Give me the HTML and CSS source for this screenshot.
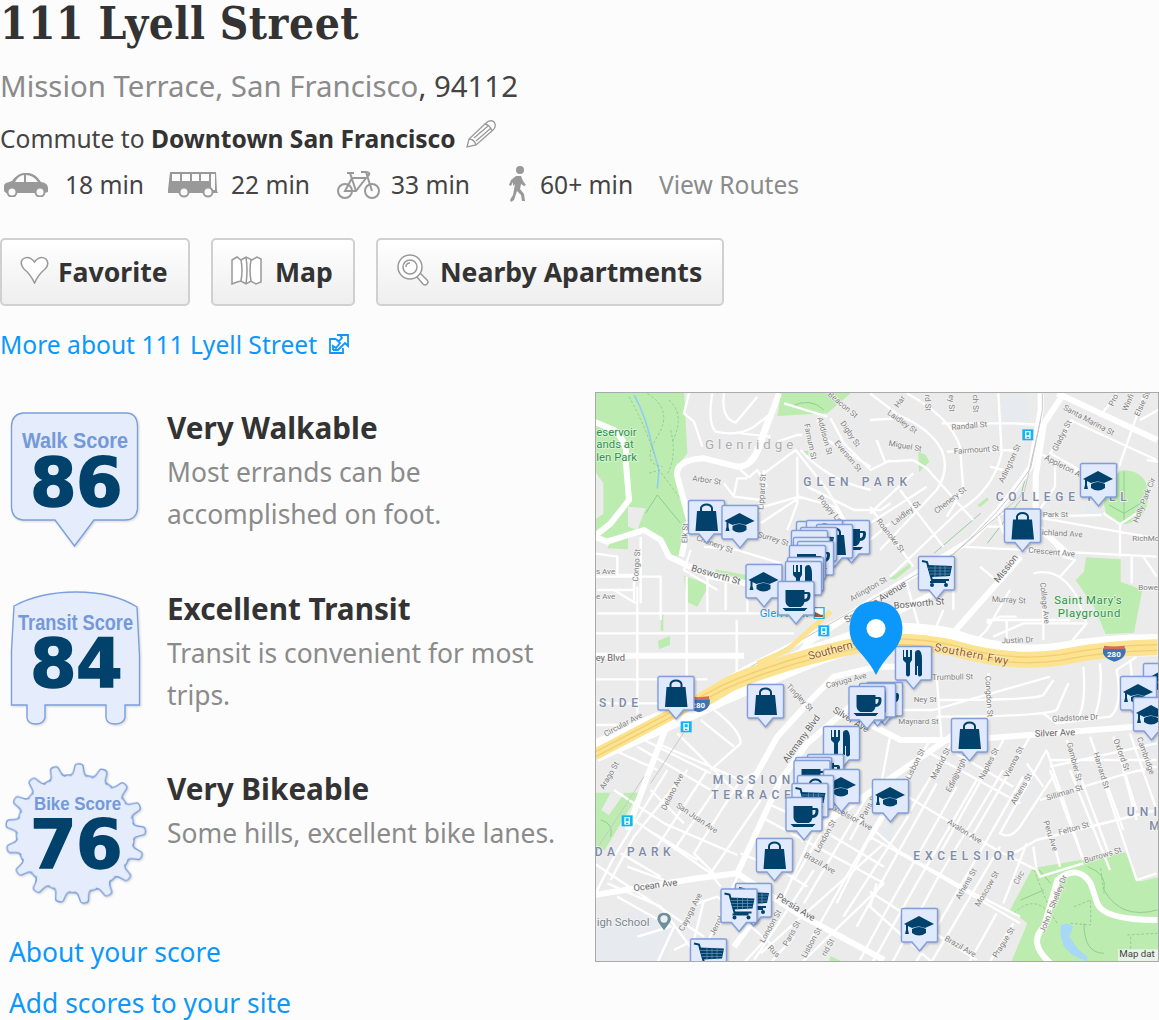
FILE: index.html
```
<!DOCTYPE html>
<html lang="en">
<head>
    <meta charset="utf-8">
    <title>111 Lyell Street</title>
    <link rel="stylesheet" href="styles.css">
</head>
<body>
    <header class="header">
        <h1>111 Lyell Street</h1>
        <p class="location"><a href="#">Mission Terrace,</a> <a href="#">San Francisco</a>, 94112</p>
        <div class="commute">
            <span>Commute to <b>Downtown San Francisco</b></span>
            <svg class="pencil" width="32" height="30" viewBox="0 0 32 30"><path d="M2 28L4 20L21 4Q25 0 29 3Q32 7 28 11L11 26ZM4 20Q9 20 11 26M20 5Q25 6 27 12M9 19L23 7M11 22L26 9"/></svg>
        </div>
        <div class="routes">
            <svg width="46" height="24" viewBox="0 0 46 24"><path fill="#999" fill-rule="evenodd" d="M1 18V13Q1 10 6 9L9 8Q15 0 21 0H26Q33 1 38 9Q45 10 45 15V19L41 20H3ZM12 9H21V2Q16 2 12 9ZM23 2V9H35Q30 2 23 2Z"/><circle class="wheel" cx="9" cy="19" r="4.5"/><circle class="wheel" cx="37" cy="19" r="4.5"/></svg>
            <span class="time time-car">18 min</span>
            <svg width="50" height="26" viewBox="0 0 50 26"><path fill="#999" fill-rule="evenodd" d="M2 0H48L49 19L50 21H0V18ZM4 2V9H12V2ZM14 2V9H22V2ZM24 2V9H31V2ZM33 2V9H41V2ZM43 2V18H47V2Z"/><circle class="wheel" cx="16" cy="20" r="4.5"/><circle class="wheel" cx="40" cy="20" r="4.5"/></svg>
            <span class="time time-bus">22 min</span>
            <svg width="44" height="29" viewBox="0 0 44 29"><g fill="none" stroke="#999" stroke-width="2"><circle cx="8" cy="20" r="7"/><circle cx="35" cy="20" r="7"/><path d="M8 20L15 7H29L19 20H8ZM19 20L13 2M10 2H17M35 20L29 1H24M30 1Q34 2 31 5"/></g></svg>
            <span class="time time-bike">33 min</span>
            <svg class="walker" width="17" height="36" viewBox="0 0 17 36"><circle cx="11" cy="4" r="4" fill="#999"/><path fill="#999" d="M7 10L12 10L14 15L17 19L15 20L12 18L11 23L15 28L16 35H13L12 29L8 25L5 34L2 36L1 34L4 29L6 18L4 20V16L2 20L0 19L2 14Z"/></svg>
            <span class="time time-walk">60+ min</span>
            <a href="#" class="view-routes">View Routes</a>
        </div>
        <div class="buttons">
            <button class="btn btn-favorite"><svg width="29" height="28" viewBox="0 0 29 28"><path d="M14.5 27Q11 19 4 13Q-1 7 3 3Q9-1 14.5 6Q20-1 26 3Q30 8 25 13Q18 19 14.5 27Z"/></svg>Favorite</button>
            <button class="btn btn-map"><svg width="31" height="29" viewBox="0 0 31 29"><path d="M1 4L6 1L10 4L15 1L21 4L26 1L30 3V26L25 28L20 25L15 28L10 25L6 26L1 28ZM10 4Q12 14 10 25M15 1Q17 14 15 28M20 4Q18 14 20 25"/></svg>Map</button>
            <button class="btn btn-nearby"><svg width="32" height="32" viewBox="0 0 32 32"><path d="M20 23L26 30Q28 32 30 30Q32 28 30 26L23 19"/><circle cx="13" cy="13" r="12"/><circle cx="13" cy="13" r="7"/><path d="M9 13Q9 9 13 9"/></svg>Nearby Apartments</button>
        </div>
        <a href="#" class="more">More about 111 Lyell Street
            <svg width="20" height="20" viewBox="0 0 20 20"><path d="M7 5H1V19H14V14M4 16V12L7 14L11 9L7 5M8 1H19V12L16 9L9 16H4M11 1L13 4L9 8"/></svg>
        </a>
    </header>

    <main class="content">
        <section class="scores">
            <div class="score">
                <svg class="badge" width="150" height="152" viewBox="0 400 150 152">
                    <path class="badge-shape" d="M23 413H126Q137 413 137.5 426V509Q136 520 125 520H94L74.5 546L55 520H23Q12 519 11.5 507V426Q12 414 23 413Z"/>
                    <text class="badge-label" x="22" y="448" textLength="106" lengthAdjust="spacingAndGlyphs">Walk Score</text>
                    <text class="badge-num" x="76" y="506">86</text>
                </svg>
                <div class="score-text">
                    <h2>Very Walkable</h2>
                    <p>Most errands can be accomplished on foot.</p>
                </div>
            </div>
            <div class="score">
                <svg class="badge" width="150" height="152" viewBox="0 580 150 152">
                    <path class="badge-shape" d="M14 605Q40 591 76 591Q113 591 137 606L139.5 655V704H125V717Q123 723 115 723Q107 723 106 717V704H45V717Q43 723 36 723Q28 723 27 717V704H11.5V650Z"/>
                    <text class="badge-label" x="18" y="628.5" textLength="115" lengthAdjust="spacingAndGlyphs">Transit Score</text>
                    <text class="badge-num" x="76" y="686">84</text>
                </svg>
                <div class="score-text">
                    <h2>Excellent Transit</h2>
                    <p>Transit is convenient for most trips.</p>
                </div>
            </div>
            <div class="score">
                <svg class="badge" width="150" height="152" viewBox="0 760 150 152">
                    <g class="badge-shape" id="gear" transform="translate(75.5 832.7) rotate(3)"><circle r="59"/></g>
                    <text class="badge-label bike" x="34" y="809" textLength="87" lengthAdjust="spacingAndGlyphs">Bike Score</text>
                    <text class="badge-num" x="76" y="867">76</text>
                </svg>
                <div class="score-text">
                    <h2>Very Bikeable</h2>
                    <p>Some hills, excellent bike lanes.</p>
                </div>
            </div>
            <nav class="links">
                <a href="#">About your score</a>
                <a href="#">Add scores to your site</a>
            </nav>
        </section>

        <div class="map">
            <svg width="562" height="568" viewBox="596 393 562 568">
                <defs>
                    <path id="box" d="M2 .5H35Q36.500 .5 36.5 2V32Q36.5 34 35 34H26L18.5 43L11 34H2Q.5 34 .5 32V2Q.5 .5 2 .5Z"/>
                    <path id="bag" d="M9 11H28L30 31H7.5ZM12 11V8Q13 3.5 18.5 3.5Q24 3.5 25 8V11H23V8Q22 5.5 18.5 5.5Q15 5.5 14 8V11Z"/>
                    <path id="cap" d="M3 16L18 8L33 16L24 20Q18 17 11 20L7 18V22L8 26H4L5 22V17ZM11 21Q18 17 25 21V25Q18 30 11 25Z"/>
                    <path id="cup" d="M8 9H27V11H31Q33 11 33 14Q33 21 27 21Q26 25 23 26H12Q8 24 8 20ZM27 13V18Q30 18 30 14V13ZM5 27H30L27 30H8Z" fill-rule="evenodd"/>
                    <path id="fork" d="M8 4H9V11H11V4H13V11H15V4H17V14L15 17V29Q13 32 11 29V17L8 14ZM20 29V7Q20 4 24 4Q27 6 27 13V29Q24 32 23 29V20H22V29Z"/>
                    <g id="cart"><path d="M4 5L9 6L14 24H31M12 26H28" fill="none" stroke="#00426b" stroke-width="2"/><path d="M9 9L34 10L32 20L13 21Z"/><path d="M10 12H33M11 15H32M12 18H32M17 9V21M22 9V21M27 9V21" stroke="#6f93b5" stroke-width=".7"/><circle cx="14" cy="29" r="2"/><circle cx="28" cy="29" r="2"/></g>
                    <g id="station"><path d="M0 0H33V33H0Z" fill="#11b5f5"/><path d="M8 5H25V28H8Z" fill="#fff"/><path d="M12 9H21V18H12ZM13 22H20V26H13Z" fill="#11b5f5"/></g>
                </defs>

                <!-- drawn at 3x, tiles of 828 x 570 -->
                <g transform="translate(594 390) scale(.33333)">
                    <g class="park">
                        <path d="M0 0H270L280 190L245 235L262 310L285 390L262 500L230 495L190 450L140 415L102 425V478L40 475L60 440L0 450V390L28 372V280L0 240Z"/>
                        <path d="M562 5H775L700 70L550 78ZM270 557L337 580V600L310 650L278 635ZM365 538L455 555V570L365 545ZM200 674H208V722H200ZM192 752L228 738V765L195 778ZM628 183H643V195H628Z"/>
                        <path d="M973 185L995 195L1006 215L975 247ZM1150 345L1180 322L1184 330L1158 352ZM885 567L948 520L950 532L905 568Z"/>
                        <path d="M1530 330Q1515 260 1590 240Q1660 245 1662 310Q1665 390 1590 403Q1530 400 1530 330ZM1476 502L1580 508V575L1645 600L1620 728L1535 732L1500 650L1445 570L1470 545Z"/>
                        <path d="M0 1208H136L32 1380H0ZM1248 1560L1315 1435L1595 1387L1635 1475L1700 1460V1720H1250L1300 1600ZM710 1698L745 1715H705Z"/>
                    </g>
                    <path fill="#e7ebef" d="M1218 15H1305V98H1230ZM0 1610L130 1560L250 1620L210 1720H0ZM1475 340L1520 345V375L1475 370ZM860 1320L905 1290L890 1355L850 1350ZM1630 1050L1700 1040V1110Z"/>
                    <path fill="#ebebeb" d="M102 350L155 355L130 420L102 410ZM50 1208H92L45 1275L22 1260Z"/>
                    <path fill="#a8d8f8" d="M1400 1605Q1425 1595 1437 1612L1425 1640L1450 1675L1480 1700V1715L1435 1695L1410 1670L1400 1640Z"/>
                    <path class="stream" d="M120 15Q155 75 175 170L195 240L190 295"/>
                    <g class="trail">
                        <path d="M105 20Q150 100 180 190M160 10Q240 60 190 140T205 230M230 120Q250 200 220 250M165 250L195 240L255 320M225 30Q275 75 235 155M1260 1570Q1330 1500 1390 1600M1320 1440L1360 1540M1520 1435L1530 1510M1440 1550L1490 1530V1605L1430 1600M1600 1635L1690 1630M1610 1640V1700"/>
                    </g>
                    <path class="trail solid" d="M155 370L190 315L260 400M20 1290Q60 1300 50 1340M590 50Q650 20 690 60M1480 1430Q1540 1450 1530 1500Q1580 1590 1690 1560M1470 1600Q1470 1690 1530 1690M1020 490L1160 370M1180 460L1280 330M1280 320L1310 200M1335 1440L1370 1480M1280 1530L1350 1500M1590 245V400M1590 370L1545 345M1590 370L1640 340"/>

                    <g class="minor">
                        <path d="M285 10L270 70L300 95L325 170M355 10Q340 100 365 125Q430 140 480 110L525 75M390 10Q380 85 425 98L490 20M520 80L480 190L440 240L465 262M440 130L530 140M570 40L700 80M550 155L610 135H625M510 250L605 180L700 300L770 420M390 280L420 320L500 330M465 262L490 240L520 290M420 315L430 265L460 265M510 240L500 360L480 370M510 350L615 320L720 350L770 420M610 200V340L580 420M640 290L780 360L860 360L890 340M500 400L620 320M670 90L700 150L830 230M710 85L750 160L830 240L890 210M620 180Q700 270 830 300M330 470L430 480L560 520"/>
                        <path d="M0 490L70 500V555H120V640M0 560H200V690M140 440V640M10 600H120M60 600L125 640M10 670H560M0 730H600M130 590V1010M278 560V900M200 600V670M428 690V860M0 868H340M10 940H280M0 1005H220M340 540V670M395 560V660M460 540V670M290 480L270 540L370 600M530 560L560 650"/>
                    </g>
                    <g class="minor" transform="translate(828 0)">
                        <path d="M0 10L85 75Q180 115 215 180Q240 240 200 300L30 480M0 90L80 85M110 10Q240 80 270 170L280 300L230 380M215 100L430 100L515 105M230 185L440 180M385 10L395 190Q370 300 270 360L60 560M20 150L45 215L130 210M130 210L170 235L310 390M0 370L130 250M90 300L220 470M0 450L60 400M0 400L170 290M0 350L130 530M360 230L400 240M510 190L600 240L680 250M555 230V290L495 380M610 90L540 190L630 240M600 90L860 210M820 20L740 250M740 10L690 80M865 60L810 90M490 380L860 445M390 370L480 375M340 410H420M515 380L695 375M270 470L860 500M750 400V500M700 370L750 403L800 370M830 210L865 215M785 500V580M520 420Q560 470 580 500L615 510L570 560M820 500L860 560M380 360L400 430M490 550Q570 530 620 620L650 700L600 760M330 530L390 580M450 500L370 600"/>
                        <path d="M110 580L150 720Q170 740 195 720L220 660M250 600V660M420 600L350 720L310 760M350 690H600M410 690V750M350 700L390 680H440M370 740L460 700H650M520 600V750M200 860L215 1050M355 850V1040M0 960H190L540 860M210 930Q500 930 520 915L550 870M200 980Q520 980 560 960L595 880M520 970L560 1000L720 980Q760 950 740 840L800 800M640 830Q650 950 620 990M690 820Q700 920 670 990M780 810L800 980M60 1040L30 1200M180 1050L140 1120L0 1350M250 1050L110 1280M400 1050L210 1390M480 1040L300 1350M530 1080L390 1330Q420 1350 450 1310L555 1150M530 1080L570 1200L640 1410M590 1050L720 1400M660 1040L760 1320M730 1040L800 1260M780 1030L860 1260M540 1130L860 1060M510 1230L770 1150L860 1130M470 1120L520 1190M540 1110L860 1110"/>
                    </g>
                    <g class="minor" transform="translate(0 1140)">
                        <path d="M60 60L210 160L430 255M170 60L270 160M190 -80L440 30L500 0M130 -70L350 60M110 -110L350 10M60 -60L190 0M360 -180Q440 -120 440 -80L350 0M250 -110L440 80M320 -150L420 -70M220 0L60 260L0 380M280 0L120 200L50 330M340 0L190 230M390 20L240 240M440 30L300 250L360 310M500 90L350 310M120 150L350 310L380 350M80 250L200 320M100 290L210 330M180 190L310 270M40 340L200 410L310 560M0 280L330 500M70 380L230 470L130 500M310 400L370 380L540 530M330 390L300 510L240 540M240 470L180 600M430 320L340 520M440 250L560 300L640 350M500 140L870 340M520 100L650 160L870 290M540 480L430 600M600 500L510 600M660 300L480 570M720 50L560 400M780 20L600 330M830 60L630 400M870 120L650 510M500 550L870 220M600 600L870 340"/>
                    </g>
                    <g class="minor" transform="translate(828 1140)">
                        <path d="M0 170L80 240L330 380L450 440M80 60L380 240L500 300M0 365L320 570M0 200L160 290L450 460M180 -50L450 100M240 -60L430 50M0 100L-60 210M50 120L0 200L-100 400M120 130L-80 440M200 40L-40 470M260 50L50 420L-30 570M320 30L140 340L0 590M400 0L200 330L60 590M460 20L230 420L130 590M390 230L170 600M470 220L400 400M380 430L290 590M430 460L350 590M20 340L0 410L200 590M490 230L500 300L510 320L640 280M430 250L500 210L860 120M550 210L570 290M540 0L640 270M600 0L720 300M690 0L800 330L860 310M760 0L800 150"/>
                    </g>
                    <g class="major">
                        <path d="M0 95L60 120Q105 160 95 210L105 330L50 400L0 440L40 455L150 420L200 450L225 500L350 560L560 600M555 10L500 160Q480 230 430 230L330 205Q240 210 250 260L285 390L262 500"/>
                        <path d="M1340 10V60L1310 230Q1230 350 1130 450L740 690L450 840L330 910L0 1080M1410 10L1350 100L1325 260V375M1390 10L1690 150M1320 400L1420 490M1280 500L1050 760M800 720L1040 600M0 797H450M450 1220L550 1040L650 930L720 860L850 830H1000M820 1000L920 1050L1110 1050L1690 1005M580 840L640 760L850 620M430 1450L560 1170L640 1060L780 940M0 1515L310 1465L430 1450L610 1570L870 1710M620 1350L1100 1020M420 1670L500 1560M240 950L160 1160L100 1320"/>
                        <path d="M1370 1720Q1300 1660 1350 1610L1390 1470Q1450 1420 1490 1480L1510 1540Q1530 1590 1690 1590"/>
                    </g>
                    <path class="rail" d="M1345 10V60L1310 235Q1220 370 1080 490L640 740L470 830M170 1180L320 950L400 910L540 880L600 790M0 1390L150 1160M1340 90L1290 310L1000 560"/>
                    <path d="M0 1085L240 980L390 910Q530 850 650 800L850 730Q980 730 1060 745Q1250 815 1400 790Q1530 765 1690 765" fill="none" stroke="#fff" stroke-width="66"/>
                    <path class="freeway-edge" d="M300 945L410 880Q600 800 850 755Q980 750 1080 775Q1250 825 1400 802Q1530 775 1690 772"/>
                    <path class="freeway" d="M0 1095L200 990L390 890Q600 800 850 755Q980 750 1080 775Q1250 825 1400 802Q1530 775 1690 772"/>
                    <path class="freeway ramp" d="M490 820L580 780L710 665"/>
                    <g class="freeway-line">
                        <path d="M0 1088L200 983L390 883Q600 793 850 747Q980 742 1080 767Q1250 817 1400 794Q1530 767 1690 764"/>
                        <path d="M0 1103L200 998L390 898Q600 808 850 764Q980 759 1080 784Q1250 834 1400 811Q1530 784 1690 781"/>
                    </g>

                    <g class="road-name">
                        <text x="294" y="272" transform="rotate(8 294 272)">Arbor St</text><text x="508" y="360" transform="rotate(-86 508 360)">Lippard St</text><text x="630" y="103" transform="rotate(78 630 103)">Farnum St</text><text x="670" y="84" transform="rotate(75 670 84)">Addison St</text><text x="738" y="100" transform="rotate(56 738 100)">Digby St</text><text x="720" y="160" transform="rotate(50 720 160)">Everson St</text><text x="700" y="16" transform="rotate(40 700 16)">Beacon St</text><text x="305" y="450" transform="rotate(20 305 450)">Chenery St</text><text x="490" y="440" transform="rotate(17 490 440)">Surrey St</text><text x="670" y="325" transform="rotate(50 670 325)">Poppy Ln</text><text x="280" y="460" transform="rotate(-88 280 460)">Elk St</text><text x="132" y="575" transform="rotate(-86 132 575)">Congo St</text><text x="6" y="552">s Ave</text><text x="6" y="626">e Ave</text>
                        <text class="big" x="290" y="542" transform="rotate(16 290 542)">Bosworth St</text><text class="big" x="5" y="812">ey Blvd</text>
                    </g>
                    <g class="road-name" transform="translate(828 0)">
                        <text x="50" y="72" transform="rotate(35 50 72)">Laidley St</text><text x="55" y="167" transform="rotate(10 55 167)">Miguel St</text><text x="245" y="120" transform="rotate(-5 245 120)">Randall St</text><text x="252" y="192" transform="rotate(-4 252 192)">Fairmount St</text><text x="400" y="280" transform="rotate(-65 400 280)">Arlington St</text><text x="560" y="185" transform="rotate(-63 560 185)">Gladys St</text><text x="578" y="58" transform="rotate(28 578 58)">Santa Marina St</text><text x="522" y="208" transform="rotate(27 522 208)">Appleton Ave</text><text x="72" y="407" transform="rotate(-38 72 407)">Laidley St</text><text x="200" y="372" transform="rotate(-38 200 372)">Chenery St</text><text x="18" y="394" transform="rotate(52 18 394)">Roanoke St</text><text x="518" y="380">Park St</text><text x="515" y="435" transform="rotate(3 515 435)">ichland Ave</text><text x="475" y="488" transform="rotate(5 475 488)">Crescent Ave</text><text x="787" y="453">RichMo</text><text x="803" y="400" transform="rotate(-68 803 400)">Holly Park Cir</text><text x="730" y="50" transform="rotate(-65 730 50)">Pro</text><text x="770" y="65" transform="rotate(-65 770 65)">Winfi</text><text x="807" y="80" transform="rotate(-65 807 80)">Elsie St</text><text x="85" y="55" transform="rotate(-55 85 55)">Har</text><text x="165" y="14" transform="rotate(88 165 14)">rd St</text><text x="236" y="14" transform="rotate(88 236 14)">ey St</text><text x="308" y="14" transform="rotate(88 308 14)">ch St</text><text class="big" x="385" y="580" transform="rotate(-52 385 580)">Mission</text>
                        <text class="big" x="-70" y="700" transform="rotate(-32 -70 700)">San Jose Avenue</text><text x="-55" y="635" transform="rotate(-30 -55 635)">Arlington St</text><text class="big" x="72" y="656" transform="rotate(-5 72 656)">Bosworth St</text><text x="365" y="635" transform="rotate(3 365 635)">Murray St</text><text x="510" y="578" transform="rotate(84 510 578)">College Ave</text><text x="395" y="760" transform="rotate(-2 395 760)">Justin Dr</text><text x="187" y="870" transform="rotate(-1 187 870)">Trumbull St</text><text x="131" y="937">Ney St</text><text x="85" y="1003">Maynard St</text><text x="346" y="858" transform="rotate(87 346 858)">Congdon St</text><text x="547" y="995" transform="rotate(-3 547 995)">Gladstone Dr</text><text class="big" x="495" y="1040" transform="rotate(-2 495 1040)">Silver Ave</text><text x="-130" y="895" transform="rotate(-15 -130 895)">Cayuga Ave</text><text x="120" y="1170" transform="rotate(-63 120 1170)">Lisbon St</text><text x="195" y="1170" transform="rotate(-63 195 1170)">Madrid St</text><text x="240" y="1205" transform="rotate(-63 240 1205)">Edinburgh St</text><text x="340" y="1170" transform="rotate(-63 340 1170)">Naples St</text><text x="415" y="1165" transform="rotate(-63 415 1165)">Vienna St</text><text x="435" y="1245" transform="rotate(-60 435 1245)">Athens St</text><text x="590" y="1060" transform="rotate(75 590 1060)">Gambier St</text><text x="670" y="1090" transform="rotate(73 670 1090)">Harvard St</text><text x="730" y="1050" transform="rotate(70 730 1050)">Oxford St</text><text x="800" y="1045" transform="rotate(70 800 1045)">Cambridge</text><text x="805" y="600">Bowe</text>
                    </g>
                    <g class="road-name" transform="translate(0 1140)">
                        <text x="30" y="60" transform="rotate(-60 30 60)">Arago St</text><text x="215" y="122" transform="rotate(-63 215 122)">Delano Ave</text><text x="245" y="110" transform="rotate(34 245 110)">San Juan Ave</text><text class="big" x="120" y="364" transform="rotate(-8 120 364)">Ocean Ave</text><text x="268" y="485" transform="rotate(-63 268 485)">Cayuga Ave</text><text x="360" y="498" transform="rotate(-63 360 498)">Jerrol</text><text class="big" x="545" y="385" transform="rotate(32 545 385)">Persia Ave</text><text x="628" y="260" transform="rotate(30 628 260)">Brazil Ave</text><text x="705" y="115" transform="rotate(28 705 115)">Excelsior Ave</text><text x="674" y="250" transform="rotate(-61 674 250)">London St</text><text x="510" y="520" transform="rotate(-61 510 520)">London St</text><text x="580" y="530" transform="rotate(-61 580 530)">Paris St</text><text x="635" y="565" transform="rotate(-61 635 565)">Lisbon St</text><text x="695" y="560" transform="rotate(-61 695 560)">rid St</text><text x="810" y="150" transform="rotate(-61 810 150)">Paris S</text><text x="520" y="535" transform="rotate(45 520 535)">Rus</text><text x="35" y="-100" transform="rotate(-28 35 -100)">Circular Ave</text><text x="575" y="-250" transform="rotate(46 575 -250)">Tingley St</text><text class="big" x="580" y="-20" transform="rotate(-54 580 -20)">Alemany Blvd</text><text class="big" x="715" y="-175" transform="rotate(32 715 -175)">Silver Ave</text><text class="big school" x="8" y="468">igh School</text>
                    </g>
                    <g class="road-name" transform="translate(828 1140)">
                        <text x="230" y="160" transform="rotate(32 230 160)">Avalon Ave</text><text x="270" y="390" transform="rotate(-60 270 390)">Athens St</text><text x="328" y="412" transform="rotate(-60 328 412)">Moscow St</text><text x="222" y="510" transform="rotate(30 222 510)">Brazil Ave</text><text x="380" y="565" transform="rotate(-58 380 565)">Prague St</text><text x="520" y="155" transform="rotate(72 520 155)">Peru Ave</text><text x="532" y="92" transform="rotate(-17 532 92)">Silliman St</text><text x="568" y="195" transform="rotate(-15 568 195)">Felton St</text><text x="645" y="280" transform="rotate(-17 645 280)">Burrows St</text><text x="523" y="490" transform="rotate(-68 523 490)">John F Shelley Dr</text><text x="443" y="345" transform="rotate(-60 443 345)">Circ</text><text x="240" y="68" transform="rotate(-60 240 68)">Edinb</text>
                    </g>

                    <g class="area">
                        <text class="light" x="333" y="178" textLength="272">Glenridge</text>
                        <text x="628" y="289" textLength="318">GLEN PARK</text>
                        <text x="1205" y="333" textLength="400">COLLEGE HILL</text>
                        <text x="15" y="950" textLength="124">SIDE</text>
                        <text x="356" y="1182" textLength="240">MISSION</text>
                        <text x="352" y="1226" textLength="245">TERRACE</text>
                        <text x="2" y="1399" textLength="235">DA PARK</text>
                        <text x="958" y="1410" textLength="310">EXCELSIOR</text>
                        <text x="1598" y="1278" textLength="98">UNI</text>
                        <text x="1666" y="1320">M</text>
                    </g>
                    <g class="park-name">
                        <text x="7" y="137">eservoir</text><text x="7" y="174">ands at</text><text x="7" y="212">len Park</text>
                        <text x="1381" y="643" textLength="202">Saint Mary's</text><text x="1391" y="681" textLength="188">Playground</text>
                    </g>
                    <g class="freeway-name"><text x="646" y="810" transform="rotate(-15 646 810)">Southern</text><text x="1020" y="782" transform="rotate(11 1020 782)" textLength="225">Southern Fwy</text></g>
                    <text class="transit-name" x="497" y="682">Glen Park</text>
                    <path d="M661 653H690V685H661Z" fill="#fff" stroke="#11b5f5" stroke-width="4"/><path d="M663 666L680 674H687V681H663Z" fill="#9a5938"/>
                    <use href="#station" x="1285" y="118"/><use href="#station" x="673" y="706"/><use href="#station" x="260" y="994"/><use href="#station" x="83" y="1276"/>
                    <g id="shield"><path fill="#3f73b8" d="M1528 775H1594Q1600 805 1561 815Q1520 803 1528 775Z"/><path fill="#d56a5b" d="M1530 767Q1560 772 1592 767V778H1530Z"/><text class="shield-text" x="1539" y="801">280</text></g>
                    <use href="#shield" x="-1247" y="152"/>
                    <path fill="#6f8f9c" d="M210 1621Q190 1595 190 1588Q190 1568 210 1568Q231 1568 231 1588Q231 1595 210 1621Z"/><circle cx="210" cy="1587" r="11" fill="#e9eef0"/>
                    <path fill="#f4f4f4" fill-opacity=".8" d="M1572 1678H1700V1720H1572Z"/><text class="credit" x="1576" y="1702">Map dat</text>
                </g>

                <g id="markers"></g>
                <path fill="#0c98fb" d="M876 675Q871 664 857 649Q849 640 849.5 627Q852 601 876 601Q900 602 902.5 627Q903 640 894 650Q881 664 876 675Z"/>
                <circle cx="876" cy="628.5" r="9.5" fill="#fff"/>
            </svg>
        </div>
    </main>

    <script src="map.js"></script>
</body>
</html>
```
FILE: styles.css
```
* {
    box-sizing: border-box;
    margin: 0;
    padding: 0;
}

body {
    width: 1159px;
    height: 1020px;
    overflow: hidden;
    background: #fcfcfc;
    color: #444;
    font-family: "Noto Sans", "Open Sans", sans-serif;
    font-size: 24.6px;
}

a {
    color: #0c98fb;
    text-decoration: none;
}

.header {
    display: flex;
    flex-direction: column;
    height: 392px;
}

h1 {
    height: 61px;
    color: #333;
    font-family: "DejaVu Serif Condensed", "DejaVu Serif", serif;
    font-size: 44px;
    font-stretch: condensed;
    font-weight: bold;
    letter-spacing: 0.5px;
    line-height: 48px;
    white-space: nowrap;
}

.location {
    height: 50px;
    font-size: 29.4px;
    line-height: 50px;
}

.location a,
.view-routes {
    color: #8b8b8b;
}

.commute {
    display: flex;
    gap: 9px;
    height: 51px;
    line-height: 56px;
}

.commute b {
    color: #333;
}

.pencil {
    margin-top: 8px;
    fill: #fff;
    stroke: #999;
    stroke-width: 1.3;
}

.routes {
    display: flex;
    align-items: center;
    height: 46px;
    padding-left: 3px;
    line-height: 46px;
}

.routes span,
.routes a {
    white-space: nowrap;
}

.routes svg {
    flex: none;
}

.routes .walker {
    margin-top: -2px;
}

.wheel {
    fill: #fcfcfc;
    stroke: #999;
    stroke-width: 2;
}

.time {
    padding-left: 16px;
}

.time-car {
    width: 119px;
}

.time-bus {
    width: 119px;
    padding-left: 13px;
}

.time-bike {
    width: 128px;
    padding-left: 10px;
}

.time-walk {
    width: 133px;
    padding-left: 14px;
}

.buttons {
    display: flex;
    gap: 21px;
    margin-top: 30px;
}

.btn {
    display: flex;
    align-items: center;
    height: 68px;
    padding: 0 20px;
    border: 2px solid #d0d0d0;
    border-radius: 5px;
    background: linear-gradient(#fff, #eee);
    color: #333;
    font: bold 26.6px "Noto Sans", "Open Sans", sans-serif;
    white-space: nowrap;
}

.btn svg {
    flex: none;
    margin-top: -4px;
    fill: #fff;
    stroke: #999;
    stroke-width: 1.5;
}

.btn-favorite {
    width: 190px;
    padding-left: 18px;
    gap: 9px;
}

.btn-map {
    width: 144px;
    padding-left: 18px;
    gap: 13px;
}

.btn-nearby {
    width: 348px;
    padding-left: 19px;
    gap: 11px;
}

.more {
    display: flex;
    align-items: center;
    gap: 12px;
    height: 40px;
    margin-top: 18px;
}

.more svg {
    fill: none;
    stroke: #0c98fb;
    stroke-width: 1.8;
}

.content {
    display: flex;
}

.scores {
    width: 595px;
    padding-top: 8px;
}

.score {
    display: flex;
    gap: 17px;
    height: 180.5px;
}

.badge {
    flex: none;
}

.badge-shape {
    fill: #e5ecfb;
    stroke: #7ba0dc;
    stroke-width: 1.4;
    filter: drop-shadow(1px 1px 1px rgba(0, 0, 0, 0.15));
}

.badge-label {
    fill: #7399d9;
    font: bold 22px "Liberation Sans Narrow", "Liberation Sans", sans-serif;
}

.badge-label.bike {
    font-size: 19px;
}

.badge-num {
    fill: #00426b;
    stroke: #00426b;
    stroke-width: 1.5;
    font: bold 67px "DejaVu Sans", sans-serif;
    letter-spacing: -0.5px;
    text-anchor: middle;
}

.score-text {
    width: 400px;
    padding-top: 7px;
}

.score-text h2 {
    color: #333;
    font-size: 29.7px;
    line-height: 42px;
}

.score-text p {
    color: #8b8b8b;
    font-size: 26.4px;
    line-height: 42px;
    padding-top: 2px;
}

.links {
    display: flex;
    flex-direction: column;
    gap: 1px;
    padding-left: 9px;
    margin-top: -15px;
    font-size: 26.4px;
    line-height: 50px;
}

.map {
    width: 564px;
    height: 570px;
    border: 1px solid #aaa;
    background: #ebebeb;
}

.map svg {
    display: block;
    font-family: Roboto, sans-serif;
}

.park {
    fill: #bdecb0;
}

.stream {
    fill: none;
    stroke: #94cdf2;
    stroke-width: 5;
}

.trail {
    fill: none;
    stroke: #86c78c;
    stroke-width: 2.5;
    stroke-dasharray: 8 6;
}

.trail.solid {
    stroke-dasharray: none;
}

.minor {
    fill: none;
    stroke: #fff;
    stroke-width: 7;
    stroke-linejoin: round;
}

.major {
    fill: none;
    stroke: #fff;
    stroke-width: 18;
    stroke-linejoin: round;
}

.rail {
    fill: none;
    stroke: #c9c9c9;
    stroke-width: 3;
}

.freeway {
    fill: none;
    stroke: #fbe391;
    stroke-width: 34;
}

.freeway.ramp {
    stroke-width: 15;
}

.freeway-edge {
    fill: none;
    stroke: #fbe391;
    stroke-width: 48;
}

.freeway-line {
    fill: none;
    stroke: #f4ce70;
    stroke-width: 4;
}

.road-name {
    fill: #808080;
    font-size: 24px;
    stroke: #f6f6f6;
    stroke-width: 4;
    paint-order: stroke;
}

.road-name .big {
    fill: #666;
    font-size: 28px;
}

.road-name .school {
    fill: #7a858e;
    font-size: 34px;
}

.area {
    fill: #7d8baa;
    font-size: 36px;
    font-weight: 500;
    letter-spacing: 7px;
    stroke: #f3f3f3;
    stroke-width: 5;
    paint-order: stroke;
}

.area .light {
    fill: #acacac;
    font-size: 40px;
    font-weight: 400;
}

.park-name {
    fill: #2f9152;
    font-size: 34px;
    stroke: #e3f7de;
    stroke-width: 4;
    paint-order: stroke;
}

.freeway-name {
    fill: #935a2c;
    font-size: 34px;
    stroke: #fff2cb;
    stroke-width: 4;
    paint-order: stroke;
}

.transit-name {
    fill: #0ca0d8;
    font-size: 34px;
}

.shield-text {
    fill: #fff;
    font-size: 24px;
    font-weight: bold;
}

.credit {
    fill: #444;
    font-size: 29px;
}

.marker {
    fill: #00426b;
}

.marker-box {
    fill: #e1eafd;
    stroke: #829fdc;
    stroke-width: 1.4;
    filter: drop-shadow(1px 1px 1px rgba(0, 0, 0, 0.25));
}
```
FILE: map.js
```
const SVG_NS = 'http://www.w3.org/2000/svg';

// x, y, icon - drawn back to front
const places = [
    [688, 500, 'bag'], [721.5, 505, 'cap'],
    [833, 520, 'cup'], [796, 521, 'bag'], [806, 520, 'bag'], [816, 524, 'bag'],
    [800, 527, 'cart'], [791, 530, 'cup'], [793, 537, 'fork'], [797, 541, 'cup'],
    [789, 545, 'cup'], [787, 557, 'fork'], [785, 561, 'fork'],
    [745.5, 564, 'cap'], [777.5, 581, 'cup'],
    [918, 556, 'cart'], [1004, 508.5, 'bag'], [1080, 463, 'cap'],
    [657.5, 676, 'bag'], [747, 684, 'bag'], [951, 718, 'bag'],
    [895, 646, 'fork'], [866, 682, 'cup'], [859, 683, 'fork'], [848.5, 686, 'cup'],
    [1143, 663, 'cap'], [1120, 676, 'cap'], [1133, 697, 'cap'],
    [823, 726, 'fork'], [807, 754, 'cup'], [795, 757, 'cup'], [793.5, 760, 'cup'],
    [823, 769, 'cap'], [797, 775, 'bag'], [791.5, 783, 'cart'], [785.5, 797, 'cup'],
    [756, 838, 'bag'], [735, 883, 'cart'], [720.5, 888.5, 'cart'], [690, 938.5, 'cart'],
    [872, 779, 'cap'], [901, 908, 'cap']
];

function use(id, className) {
    const el = document.createElementNS(SVG_NS, 'use');
    el.setAttribute('href', '#' + id);
    if (className) el.setAttribute('class', className);
    return el;
}

const markers = document.getElementById('markers');
places.forEach(([x, y, icon]) => {
    const g = document.createElementNS(SVG_NS, 'g');
    g.setAttribute('class', 'marker');
    g.setAttribute('transform', `translate(${x} ${y})`);
    g.append(use('box', 'marker-box'), use(icon));
    markers.append(g);
});

// bike score gear teeth
const gear = document.getElementById('gear');
const teeth = 17;
for (let i = 0; i < teeth; i++) {
    const tooth = document.createElementNS(SVG_NS, 'path');
    tooth.setAttribute('d', 'M-8.5 -57.5Q-5.5 -59 -5 -63L-4 -68Q-3.5 -70 0 -70Q3.5 -70 4 -68L5 -63Q5.5 -59 8.5 -57.5');
    tooth.setAttribute('transform', `rotate(${i * 360 / teeth})`);
    gear.append(tooth);
}
```
